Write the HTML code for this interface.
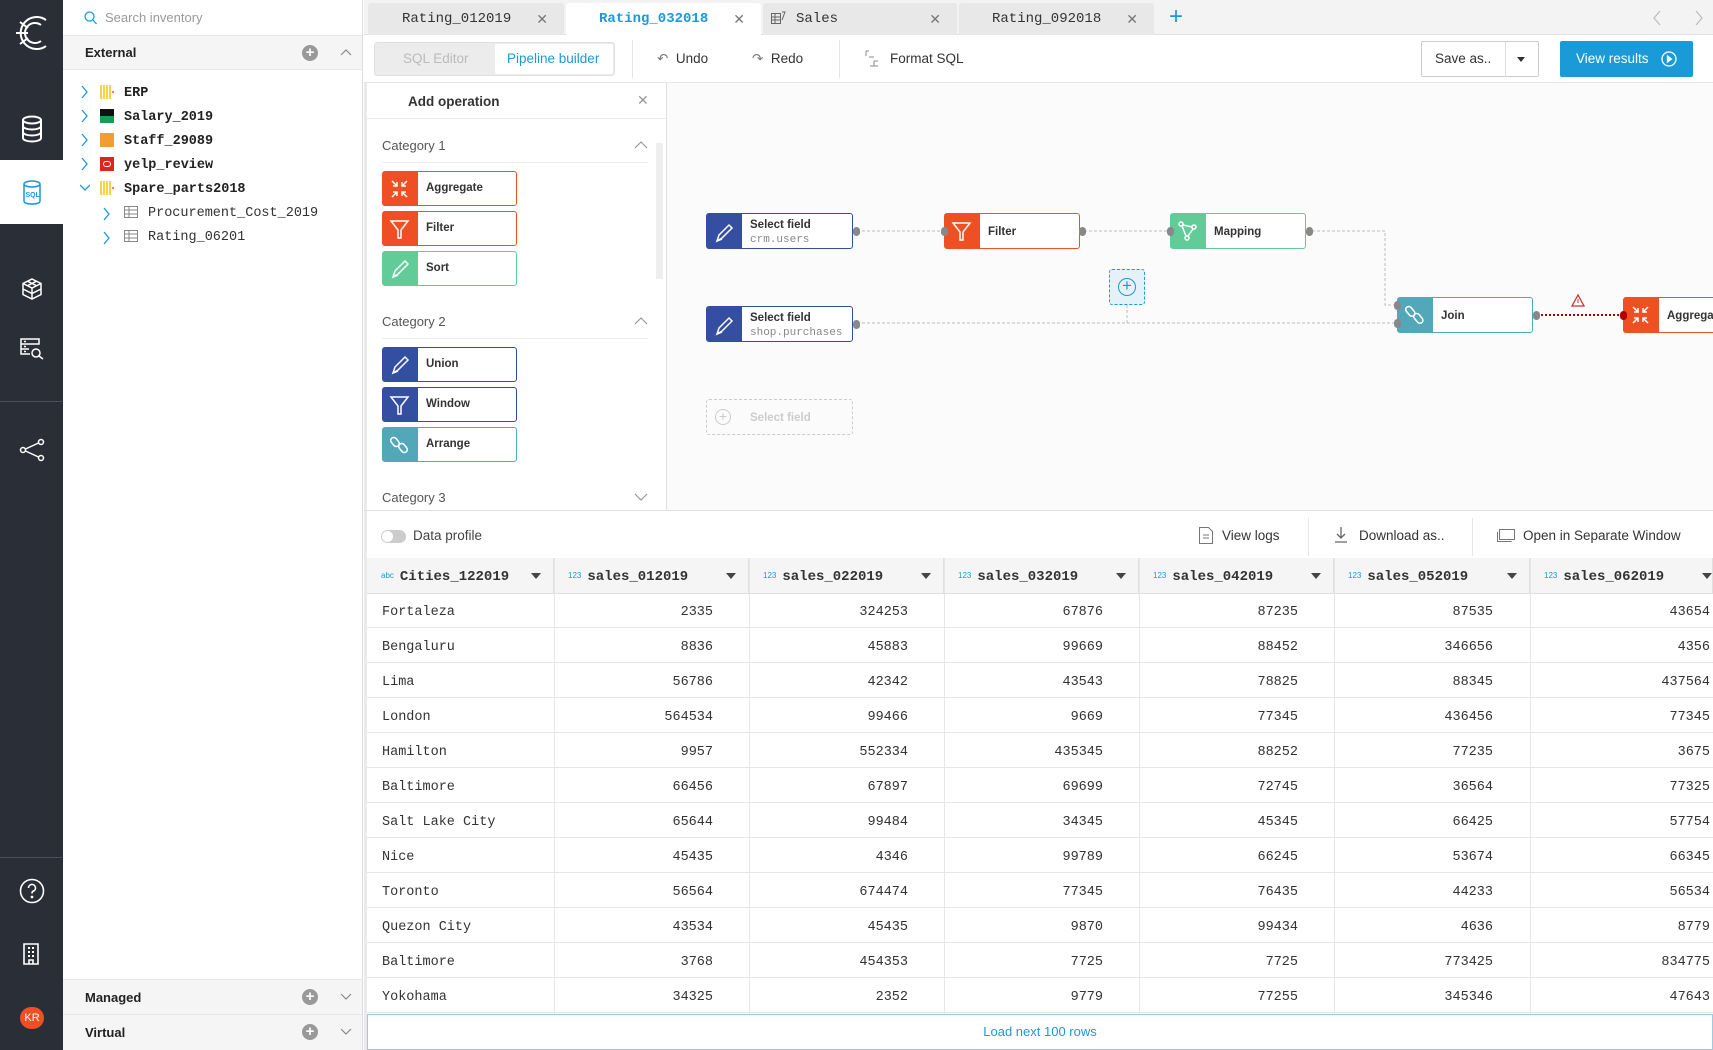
<!DOCTYPE html>
<html><head><meta charset="utf-8"><style>
*{box-sizing:border-box;margin:0;padding:0}
body{width:1713px;height:1050px;overflow:hidden;background:#fff;font-family:"Liberation Sans",sans-serif;color:#333;position:relative;font-size:13px}
.a{position:absolute}
.mono{font-family:"Liberation Mono",monospace}
.side{left:0;top:0;width:63px;height:1050px;background:#2a2e37}
.tab{top:3px;height:32px;background:#e8e8e8;border-radius:3px 3px 0 0;font-family:"Liberation Mono",monospace;font-size:14px;color:#333;line-height:32px}
.tab .x{position:absolute;right:16px;top:0;color:#777;font-family:"Liberation Sans";font-size:14px}
.op{left:382px;width:135px;height:35px;border:1px solid;border-radius:3px;background:#fff}
.op .ic{position:absolute;left:0;top:0;width:35px;height:100%}
.op .t{position:absolute;left:43px;top:10px;font-size:11.5px;font-weight:bold;color:#333}
.node{width:147px;height:36px;border:1px solid;border-radius:3px;background:#fff}
.node .ic{position:absolute;left:0;top:0;width:35px;height:100%}
.node .t{position:absolute;left:43px;font-size:11.5px;font-weight:bold;color:#333}
.node .s{position:absolute;left:43px;top:19px;font-family:"Liberation Mono",monospace;font-size:11px;color:#888}
.dot{width:7px;height:9px;border-radius:4px;background:#888}
.cat{left:382px;font-size:13px;color:#555}
.cl{left:382px;width:266px;height:1px;background:#ececec}
.row{left:367px;width:1346px;height:35px;border-bottom:1px solid #e6e6e6;font-family:"Liberation Mono",monospace;font-size:13.5px;color:#333}
.row div{position:absolute;top:12px;text-align:right}
.th{top:558px;height:36px;background:#f5f5f5;border-bottom:1px solid #e0e0e0;border-right:1px solid #e0e0e0;font-family:"Liberation Mono",monospace;font-weight:bold;font-size:14px;line-height:36px}
.th i{font-style:normal;font-size:8px;color:#1a9ad6;font-family:"Liberation Sans";font-weight:normal;margin:0 6px 0 14px;vertical-align:2px}
.th b{position:absolute;right:12px;top:15px;width:0;height:0;border-left:5px solid transparent;border-right:5px solid transparent;border-top:6px solid #444}
.vl{top:558px;width:1px;height:456px;background:#e6e6e6}
</style></head><body>

<div class="a side"></div>
<svg class="a" style="left:12px;top:12px" width="40" height="42" viewBox="0 0 40 42" fill="none" stroke="#fff" stroke-width="2"><path d="M34 8A16 16 0 1 0 34 34"/><path d="M29 13A10 10 0 1 0 29 29"/><path d="M4 21h12M8 10l8 6M8 32l8-6"/></svg>
<svg class="a" style="left:20px;top:115px" width="24" height="28" viewBox="0 0 24 28" fill="none" stroke="#fff" stroke-width="2"><ellipse cx="12" cy="5" rx="9" ry="3.5"/><path d="M3 5v18c0 2 4 3.5 9 3.5s9-1.5 9-3.5V5M3 11c0 2 4 3.5 9 3.5s9-1.5 9-3.5M3 17c0 2 4 3.5 9 3.5s9-1.5 9-3.5"/></svg>
<div class="a" style="left:0;top:160px;width:63px;height:64px;background:#fff"></div>
<svg class="a" style="left:22px;top:180px" width="20" height="26" viewBox="0 0 20 26" fill="none" stroke="#1a9ad6" stroke-width="1.5"><ellipse cx="10" cy="4" rx="8" ry="3"/><path d="M2 4v17c0 2 3.5 3 8 3s8-1 8-3V4"/><text x="3.5" y="17" font-size="7" fill="#1a9ad6" stroke="none" font-family="Liberation Sans" font-weight="bold">SQL</text></svg>
<svg class="a" style="left:21px;top:278px" width="22" height="22" viewBox="0 0 22 22" fill="none" stroke="#fff" stroke-width="1.5"><path d="M11 1l9 4.5v11L11 21l-9-4.5v-11zM2 5.5l9 4.5 9-4.5M11 10v11M6.5 3.2l9 4.5M15.5 3.2l-9 4.5M2 11l9 4.5 9-4.5"/></svg>
<svg class="a" style="left:20px;top:338px" width="24" height="22" viewBox="0 0 24 22" fill="none" stroke="#fff" stroke-width="1.5"><path d="M1 1h18v5H1zM1 6v10h9M1 11h8M4 3.5h2M4 8.5h2M4 13.5h2"/><circle cx="16" cy="15" r="4"/><path d="M19 18l4 3"/></svg>
<div class="a" style="left:0;top:401px;width:63px;height:1px;background:#4a4e57"></div>
<svg class="a" style="left:19px;top:437px" width="26" height="26" viewBox="0 0 26 26" fill="none" stroke="#fff" stroke-width="1.5"><circle cx="4" cy="13" r="2.5"/><circle cx="22" cy="5" r="2.5"/><circle cx="22" cy="21" r="2.5"/><path d="M6.5 12l13-6M6.5 14l13 6"/></svg>
<div class="a" style="left:0;top:857px;width:63px;height:1px;background:#4a4e57"></div>
<svg class="a" style="left:19px;top:878px" width="26" height="26" viewBox="0 0 26 26" fill="none" stroke="#fff" stroke-width="1.6"><circle cx="13" cy="13" r="11.5"/><path d="M9.5 10a3.5 3.5 0 1 1 4.5 3.3c-1 .4-1 1-1 2.2"/><circle cx="13" cy="19" r=".6" fill="#fff"/></svg>
<svg class="a" style="left:23px;top:943px" width="16" height="22" viewBox="0 0 16 22" fill="none" stroke="#fff" stroke-width="1.6"><path d="M1 1h14v20H1zM6 21v-4h4v4"/><path d="M5 5h2M9 5h2M5 9h2M9 9h2M5 13h2M9 13h2" stroke-width="2"/></svg>
<div class="a" style="left:20px;top:1007px;width:24px;height:22px;border-radius:11px;background:#ee4f23;color:#fff;font-size:11px;line-height:22px;text-align:center">KR</div>

<div class="a" style="left:63px;top:0;width:300px;height:1050px;background:#fff;border-right:1px solid #ddd"></div>
<svg class="a" style="left:84px;top:11px" width="13" height="14" viewBox="0 0 13 14" fill="none" stroke="#1a9ad6" stroke-width="1.3"><circle cx="5.5" cy="5.5" r="4.5"/><path d="M9 9l3.5 4"/></svg>
<div class="a" style="left:105px;top:10px;font-size:13px;color:#999">Search inventory</div>
<div class="a" style="left:63px;top:35px;width:299px;height:35px;background:#f5f5f5;border-top:1px solid #e6e6e6;border-bottom:1px solid #e6e6e6"></div>
<div class="a" style="left:85px;top:45px;font-size:13px;font-weight:bold;color:#222">External</div>
<div class="a" style="left:302px;top:45px;width:16px;height:16px;border-radius:8px;background:#999;color:#fff;font-size:15px;line-height:15px;text-align:center;font-weight:bold">+</div>
<svg class="a" style="left:340px;top:48px" width="12" height="8" viewBox="0 0 12 8" fill="none" stroke="#888" stroke-width="1.2"><path d="M1 7l5-5 5 5"/></svg>

<svg class="a" style="left:80px;top:85px" width="10" height="160" viewBox="0 0 10 160" fill="none" stroke="#1a9ad6" stroke-width="1.3"><path d="M2 1l5 6-5 6M2 25l5 6-5 6M2 49l5 6-5 6M2 73l5 6-5 6"/><path d="M0 100l5 5 5-5" /></svg>
<svg class="a" style="left:102px;top:207px" width="10" height="40" viewBox="0 0 10 40" fill="none" stroke="#1a9ad6" stroke-width="1.3"><path d="M2 1l5 6-5 6M2 25l5 6-5 6"/></svg>
<svg class="a" style="left:100px;top:85px" width="15" height="14"><g stroke="#f5c400" stroke-width="1.5"><path d="M1 0v14M4 0v14M7 0v14M10 0v14"/></g><path d="M13 6v2" stroke="#ee4f23" stroke-width="1.5"/></svg>
<div class="a" style="left:100px;top:109px;width:14px;height:14px;background:#111"><div style="position:absolute;left:0;top:7px;width:14px;height:7px;background:#12a057"></div></div>
<div class="a" style="left:100px;top:133px;width:14px;height:14px;background:#f39c34"></div>
<div class="a" style="left:100px;top:157px;width:14px;height:14px;background:#e0231c"><div style="position:absolute;left:3px;top:4px;width:8px;height:6px;border:1.5px solid #fff;border-radius:3px"></div></div>
<svg class="a" style="left:100px;top:181px" width="15" height="14"><g stroke="#f5c400" stroke-width="1.5"><path d="M1 0v14M4 0v14M7 0v14M10 0v14"/></g><path d="M13 6v2" stroke="#ee4f23" stroke-width="1.5"/></svg>
<svg class="a" style="left:124px;top:206px" width="14" height="36" viewBox="0 0 14 36" fill="none" stroke="#888" stroke-width="1"><path d="M.5.5h13v11H.5zM.5 4h13M.5 8h13M5 .5v11M.5 24.5h13v11H.5zM.5 28h13M.5 32h13M5 24.5v11"/></svg>
<div class="a mono" style="left:124px;top:82px;font-size:13.5px;font-weight:bold;color:#222;line-height:24px">ERP<br>Salary_2019<br>Staff_29089<br>yelp_review<br>Spare_parts2018</div>
<div class="a mono" style="left:148px;top:202px;font-size:13.5px;color:#333;line-height:24px">Procurement_Cost_2019<br>Rating_06201</div>

<div class="a" style="left:63px;top:979px;width:299px;height:71px;background:#f5f5f5;border-top:1px solid #e6e6e6"></div>
<div class="a" style="left:63px;top:1014px;width:299px;height:1px;background:#e6e6e6"></div>
<div class="a" style="left:85px;top:990px;font-size:13px;font-weight:bold;color:#222">Managed</div>
<div class="a" style="left:85px;top:1025px;font-size:13px;font-weight:bold;color:#222">Virtual</div>
<div class="a" style="left:302px;top:989px;width:16px;height:16px;border-radius:8px;background:#999;color:#fff;font-size:15px;line-height:15px;text-align:center;font-weight:bold">+</div>
<div class="a" style="left:302px;top:1024px;width:16px;height:16px;border-radius:8px;background:#999;color:#fff;font-size:15px;line-height:15px;text-align:center;font-weight:bold">+</div>
<svg class="a" style="left:340px;top:993px" width="12" height="44" viewBox="0 0 12 44" fill="none" stroke="#888" stroke-width="1.2"><path d="M1 1l5 5 5-5M1 36l5 5 5-5"/></svg>

<div class="a" style="left:364px;top:0;width:1349px;height:35px;background:#f3f3f3;border-bottom:1px solid #e0e0e0"></div>
<div class="a tab" style="left:368px;width:196px;padding-left:34px">Rating_012019<span class="x">✕</span></div>
<div class="a tab" style="left:566px;width:195px;background:#fff;height:33px;color:#1a9ad6;font-weight:bold;padding-left:33px">Rating_032018<span class="x" style="font-weight:normal">✕</span></div>
<div class="a tab" style="left:763px;width:194px;padding-left:33px"><svg style="position:absolute;left:8px;top:8px" width="16" height="14" fill="none" stroke="#666" stroke-width="1"><path d="M.5 2.5h9v10h-9zM.5 6h9M.5 9h9M4 2.5v10M11 1l3 0-3 8"/></svg>Sales<span class="x">✕</span></div>
<div class="a tab" style="left:959px;width:195px;padding-left:33px">Rating_092018<span class="x">✕</span></div>
<div class="a" style="left:1169px;top:3px;font-size:24px;color:#1a9ad6;line-height:28px">+</div>
<svg class="a" style="left:1653px;top:10px" width="50" height="16" fill="none" stroke="#bbb" stroke-width="1.2"><path d="M7 1L1 8l6 7M43 1l6 7-6 7"/></svg>

<div class="a" style="left:364px;top:35px;width:1349px;height:48px;background:#fff;border-bottom:1px solid #e6e6e6"></div>
<div class="a" style="left:374px;top:42px;width:241px;height:34px;background:#ececec;border:1px solid #e0e0e0;border-radius:3px"></div>
<div class="a" style="left:403px;top:51px;font-size:13.5px;color:#bbb">SQL Editor</div>
<div class="a" style="left:495px;top:44px;width:118px;height:30px;background:#fff;border-radius:2px"></div>
<div class="a" style="left:507px;top:51px;font-size:13.5px;color:#1a9ad6">Pipeline builder</div>
<div class="a" style="left:632px;top:40px;width:1px;height:38px;background:#e6e6e6"></div>
<div class="a" style="left:657px;top:51px;font-size:13.5px;color:#333"><span style="color:#777">↶</span>&nbsp; Undo</div>
<div class="a" style="left:752px;top:51px;font-size:13.5px;color:#333"><span style="color:#777">↷</span>&nbsp; Redo</div>
<div class="a" style="left:839px;top:40px;width:1px;height:38px;background:#e6e6e6"></div>
<svg class="a" style="left:865px;top:50px" width="14" height="18" fill="none" stroke="#888" stroke-width="1"><path d="M1 1h3M1 1v5M4 7h5M9 11h4M9 11v5M5 16h8"/></svg>
<div class="a" style="left:890px;top:51px;font-size:13.5px;color:#333">Format SQL</div>
<div class="a" style="left:1421px;top:41px;width:118px;height:36px;border:1px solid #ccc;border-radius:2px;background:#fff"></div>
<div class="a" style="left:1505px;top:41px;width:1px;height:36px;background:#ddd"></div>
<div class="a" style="left:1435px;top:51px;font-size:13.5px;color:#333">Save as..</div>
<div class="a" style="left:1517px;top:57px;border-left:4px solid transparent;border-right:4px solid transparent;border-top:5px solid #333"></div>
<div class="a" style="left:1560px;top:41px;width:133px;height:36px;background:#1a9ad6;border-radius:2px"></div>
<div class="a" style="left:1576px;top:51px;font-size:13.5px;color:#fff">View results</div>
<svg class="a" style="left:1661px;top:51px" width="16" height="16" fill="none" stroke="#fff" stroke-width="1.3"><circle cx="8" cy="8" r="7"/><path d="M6.5 5l4 3-4 3z" fill="#fff"/></svg>

<div class="a" style="left:364px;top:83px;width:303px;height:427px;background:#fff;border-right:1px solid #e0e0e0"></div>
<div class="a" style="left:364px;top:83px;width:3px;height:427px;background:#eaeaea"></div>
<div class="a" style="left:367px;top:118px;width:299px;height:1px;background:#ececec"></div>
<div class="a" style="left:408px;top:94px;font-size:13.5px;font-weight:bold;color:#333">Add operation</div>
<div class="a" style="left:637px;top:92px;font-size:14px;color:#999">✕</div>
<div class="a" style="left:656px;top:143px;width:7px;height:136px;background:#eee"></div>
<div class="a cat" style="top:138px">Category 1</div>
<div class="a cl" style="top:162px"></div>
<div class="a cat" style="top:314px">Category 2</div>
<div class="a cl" style="top:338px"></div>
<div class="a cat" style="top:490px">Category 3</div>
<svg class="a" style="left:634px;top:140px" width="14" height="370" fill="none" stroke="#999" stroke-width="1.2"><path d="M1 8l6-6 6 6M1 184l6-6 6 6M1 354l6 6 6-6"/></svg>

<div class="a op" style="top:171px;border-color:#ee4f23"><div class="ic" style="background:#ee4f23"></div><div class="t">Aggregate</div></div>
<div class="a op" style="top:211px;border-color:#ee4f23"><div class="ic" style="background:#ee4f23"></div><div class="t">Filter</div></div>
<div class="a op" style="top:251px;border-color:#62cc99"><div class="ic" style="background:#62cc99"></div><div class="t">Sort</div></div>
<div class="a op" style="top:347px;border-color:#344ea1"><div class="ic" style="background:#344ea1"></div><div class="t">Union</div></div>
<div class="a op" style="top:387px;border-color:#344ea1"><div class="ic" style="background:#344ea1"></div><div class="t">Window</div></div>
<div class="a op" style="top:427px;border-color:#52a8b8"><div class="ic" style="background:#52a8b8"></div><div class="t">Arrange</div></div>

<svg class="a" style="left:382px;top:171px" width="35" height="300" fill="none" stroke="#fff" stroke-width="1.5">
<g><path d="M10 10l5 5M15 11v4h-4M25 10l-5 5M20 11v4h4M10 26l5-5M11 21h4v4M25 26l-5-5M24 21h-4v4"/></g>
<g transform="translate(0,40)"><path d="M9 10h17l-7 9v8h-3v-8z"/></g>
<g transform="translate(0,80)"><path d="M11 26l2-6 10-10 3 3-10 10zM11 26l5-2"/></g>
<g transform="translate(0,176)"><path d="M11 26l2-6 10-10 3 3-10 10zM11 26l5-2"/></g>
<g transform="translate(0,216)"><path d="M9 10h17l-7 9v8h-3v-8z"/></g>
<g transform="translate(0,256)"><rect x="10" y="10" width="6" height="10" rx="3" transform="rotate(-40 13 15)"/><rect x="18" y="16" width="6" height="10" rx="3" transform="rotate(-40 21 21)"/></g>
</svg>

<div class="a" style="left:667px;top:83px;width:1046px;height:427px;background:#fbfbfb"></div>
<svg class="a" style="left:667px;top:83px" width="1046" height="427" fill="none">
<g stroke="#bbb" stroke-dasharray="3 2"><path d="M190 148h83M412 148h91M640 148h78v74h9M190 240h537M460 222v18"/></g>
<path d="M870 232h120" stroke="#a00" stroke-width="2" stroke-dasharray="2 2"/>
<path d="M911 212l-6 11h12z" stroke="#c33" stroke-width="1.3"/><path d="M911 216v4" stroke="#c33"/>
</svg>
<div class="a node" style="left:706px;top:213px;border-color:#344ea1"><div class="ic" style="background:#344ea1"></div><div class="t" style="top:5px">Select field</div><div class="s" style="top:20px">crm.users</div></div>
<div class="a node" style="left:706px;top:306px;border-color:#344ea1"><div class="ic" style="background:#344ea1"></div><div class="t" style="top:5px">Select field</div><div class="s" style="top:20px">shop.purchases</div></div>
<div class="a node" style="left:944px;top:213px;width:136px;border-color:#ee4f23"><div class="ic" style="background:#ee4f23"></div><div class="t" style="top:12px">Filter</div></div>
<div class="a node" style="left:1170px;top:213px;width:136px;border-color:#62cc99"><div class="ic" style="background:#62cc99"></div><div class="t" style="top:12px">Mapping</div></div>
<div class="a node" style="left:1397px;top:297px;width:136px;border-color:#52a8b8"><div class="ic" style="background:#52a8b8"></div><div class="t" style="top:12px">Join</div></div>
<div class="a node" style="left:1623px;top:297px;width:120px;border-color:#ee4f23"><div class="ic" style="background:#ee4f23"></div><div class="t" style="top:12px">Aggregate</div></div>
<div class="a" style="left:706px;top:399px;width:147px;height:36px;border:1px dashed #ccc;border-radius:3px"></div>
<div class="a" style="left:715px;top:409px;width:16px;height:16px;border:1px solid #ccc;border-radius:8px;color:#ccc;font-size:14px;line-height:13px;text-align:center">+</div>
<div class="a" style="left:750px;top:412px;font-size:11.5px;font-weight:bold;color:#ccc">Select field</div>
<div class="a" style="left:1109px;top:269px;width:36px;height:36px;background:#e4f1f8;border:1px dashed #1a9ad6;border-radius:3px"></div>
<div class="a" style="left:1118px;top:278px;width:18px;height:18px;border:1.5px solid #1a9ad6;border-radius:9px;color:#1a9ad6;font-size:17px;line-height:14px;text-align:center">+</div>
<svg class="a" style="left:706px;top:213px" width="1010" height="130" fill="none" stroke="#fff" stroke-width="1.5">
<path d="M11 28l2-6 10-10 3 3-10 10zM11 28l5-2"/>
<path d="M11 121l2-6 10-10 3 3-10 10zM11 121l5-2"/>
<path d="M247 10h17l-7 9v8h-3v-8z"/>
<g transform="translate(464,0)"><circle cx="11" cy="11" r="2"/><circle cx="24" cy="14" r="2"/><circle cx="17" cy="25" r="2"/><path d="M12 13l4 10M13 12l9 2M23 16l-5 7"/></g>
<g transform="translate(691,84)"><rect x="10" y="9" width="6" height="11" rx="3" transform="rotate(-40 13 14)"/><rect x="18" y="16" width="6" height="11" rx="3" transform="rotate(-40 21 21)"/></g>
<g transform="translate(917,84)"><path d="M10 10l5 5M15 11v4h-4M25 10l-5 5M20 11v4h4M10 26l5-5M11 21h4v4M25 26l-5-5M24 21h-4v4"/></g>
</svg>
<div class="a dot" style="left:853px;top:227px"></div>
<div class="a dot" style="left:853px;top:320px"></div>
<div class="a dot" style="left:941px;top:227px"></div>
<div class="a dot" style="left:1079px;top:227px"></div>
<div class="a dot" style="left:1167px;top:227px"></div>
<div class="a dot" style="left:1306px;top:227px"></div>
<div class="a dot" style="left:1394px;top:301px"></div>
<div class="a dot" style="left:1394px;top:319px"></div>
<div class="a dot" style="left:1533px;top:311px"></div>
<div class="a dot" style="left:1620px;top:311px;background:#a00"></div>

<div class="a" style="left:364px;top:510px;width:1349px;height:1px;background:#e0e0e0"></div>
<div class="a" style="left:364px;top:511px;width:3px;height:539px;background:#eaeaea"></div>
<div class="a" style="left:381px;top:530px;width:25px;height:13px;border-radius:7px;background:#ccc"><div style="position:absolute;left:1px;top:1px;width:11px;height:11px;border-radius:6px;background:#fff"></div></div>
<div class="a" style="left:413px;top:528px;font-size:13.5px;color:#444">Data profile</div>
<svg class="a" style="left:1199px;top:527px" width="14" height="17" fill="none" stroke="#777" stroke-width="1"><path d="M.5.5h9l4 4v12H.5zM4 8h6M4 11h6"/></svg>
<div class="a" style="left:1222px;top:528px;font-size:13.5px;color:#333">View logs</div>
<div class="a" style="left:1308px;top:518px;width:1px;height:38px;background:#e6e6e6"></div>
<svg class="a" style="left:1334px;top:527px" width="14" height="16" fill="none" stroke="#666" stroke-width="1.3"><path d="M7 0v11M3 7l4 4 4-4M1 15h12"/></svg>
<div class="a" style="left:1359px;top:528px;font-size:13.5px;color:#333">Download as..</div>
<div class="a" style="left:1472px;top:518px;width:1px;height:38px;background:#e6e6e6"></div>
<svg class="a" style="left:1497px;top:529px" width="18" height="13" fill="none" stroke="#777" stroke-width="1"><path d="M2.5.5h15v10h-15zM.5 3v9.5h14"/></svg>
<div class="a" style="left:1523px;top:528px;font-size:13.5px;color:#333">Open in Separate Window</div>

<div class="a th" style="left:367px;width:187px"><i>abc</i>Cities_122019<b></b></div>
<div class="a th" style="left:554px;width:195px"><i>123</i>sales_012019<b></b></div>
<div class="a th" style="left:749px;width:195px"><i>123</i>sales_022019<b></b></div>
<div class="a th" style="left:944px;width:195px"><i>123</i>sales_032019<b></b></div>
<div class="a th" style="left:1139px;width:195px"><i>123</i>sales_042019<b></b></div>
<div class="a th" style="left:1334px;width:196px"><i>123</i>sales_052019<b></b></div>
<div class="a th" style="left:1530px;width:183px"><i>123</i>sales_062019<b style="right:0"></b></div>

<div class="a vl" style="left:554px"></div><div class="a vl" style="left:749px"></div><div class="a vl" style="left:944px"></div><div class="a vl" style="left:1139px"></div><div class="a vl" style="left:1334px"></div><div class="a vl" style="left:1530px"></div>

<div class="a row" style="top:593px"><div style="left:15px">Fortaleza</div><div style="right:1000px">2335</div><div style="right:805px">324253</div><div style="right:610px">67876</div><div style="right:415px">87235</div><div style="right:220px">87535</div><div style="right:3px">43654</div></div>
<div class="a row" style="top:628px"><div style="left:15px">Bengaluru</div><div style="right:1000px">8836</div><div style="right:805px">45883</div><div style="right:610px">99669</div><div style="right:415px">88452</div><div style="right:220px">346656</div><div style="right:3px">4356</div></div>
<div class="a row" style="top:663px"><div style="left:15px">Lima</div><div style="right:1000px">56786</div><div style="right:805px">42342</div><div style="right:610px">43543</div><div style="right:415px">78825</div><div style="right:220px">88345</div><div style="right:3px">437564</div></div>
<div class="a row" style="top:698px"><div style="left:15px">London</div><div style="right:1000px">564534</div><div style="right:805px">99466</div><div style="right:610px">9669</div><div style="right:415px">77345</div><div style="right:220px">436456</div><div style="right:3px">77345</div></div>
<div class="a row" style="top:733px"><div style="left:15px">Hamilton</div><div style="right:1000px">9957</div><div style="right:805px">552334</div><div style="right:610px">435345</div><div style="right:415px">88252</div><div style="right:220px">77235</div><div style="right:3px">3675</div></div>
<div class="a row" style="top:768px"><div style="left:15px">Baltimore</div><div style="right:1000px">66456</div><div style="right:805px">67897</div><div style="right:610px">69699</div><div style="right:415px">72745</div><div style="right:220px">36564</div><div style="right:3px">77325</div></div>
<div class="a row" style="top:803px"><div style="left:15px">Salt Lake City</div><div style="right:1000px">65644</div><div style="right:805px">99484</div><div style="right:610px">34345</div><div style="right:415px">45345</div><div style="right:220px">66425</div><div style="right:3px">57754</div></div>
<div class="a row" style="top:838px"><div style="left:15px">Nice</div><div style="right:1000px">45435</div><div style="right:805px">4346</div><div style="right:610px">99789</div><div style="right:415px">66245</div><div style="right:220px">53674</div><div style="right:3px">66345</div></div>
<div class="a row" style="top:873px"><div style="left:15px">Toronto</div><div style="right:1000px">56564</div><div style="right:805px">674474</div><div style="right:610px">77345</div><div style="right:415px">76435</div><div style="right:220px">44233</div><div style="right:3px">56534</div></div>
<div class="a row" style="top:908px"><div style="left:15px">Quezon City</div><div style="right:1000px">43534</div><div style="right:805px">45435</div><div style="right:610px">9870</div><div style="right:415px">99434</div><div style="right:220px">4636</div><div style="right:3px">8779</div></div>
<div class="a row" style="top:943px"><div style="left:15px">Baltimore</div><div style="right:1000px">3768</div><div style="right:805px">454353</div><div style="right:610px">7725</div><div style="right:415px">7725</div><div style="right:220px">773425</div><div style="right:3px">834775</div></div>
<div class="a row" style="top:978px"><div style="left:15px">Yokohama</div><div style="right:1000px">34325</div><div style="right:805px">2352</div><div style="right:610px">9779</div><div style="right:415px">77255</div><div style="right:220px">345346</div><div style="right:3px">47643</div></div>

<div class="a" style="left:367px;top:1014px;width:1346px;height:36px;border:1px solid #9ccbe6;background:#fff;text-align:center;line-height:34px;font-size:13px;color:#1a9ad6">Load next 100 rows</div>
</body></html>
